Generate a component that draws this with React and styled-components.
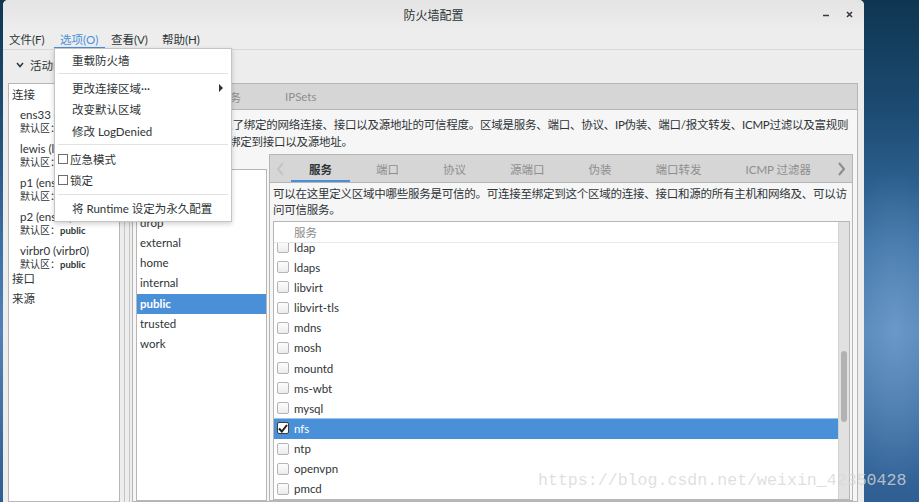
import React from 'react'
import styled, { createGlobalStyle } from 'styled-components'

const GlobalStyle = createGlobalStyle`
  html, body { margin: 0; padding: 0; }
  body {
    font-family: Lato, "Noto Sans CJK SC", sans-serif;
    font-size: 11.5px;
    color: #2e3436;
    overflow: hidden;
  }
`

const Desktop = styled.div`
  position: relative;
  width: 919px;
  height: 502px;
  overflow: hidden;
  display: flex;
  background:
    radial-gradient(ellipse 60px 160px at 895px 330px, rgba(140,180,220,0.45), transparent),
    linear-gradient(180deg, #0f3651 0%, #1c4b72 22%, #3a6fa3 48%, #4f82b6 66%, #2e5e92 100%);
`

const Window = styled.div`
  position: relative;
  margin-left: 3px;
  width: 861px;
  height: 502px;
  display: flex;
  flex-direction: column;
  background: #ededed;
  border-radius: 5px 5px 0 0;
`

const TitleBar = styled.div`
  height: 28px;
  display: grid;
  grid-template-columns: 1fr auto 1fr;
  align-items: center;
  background: linear-gradient(#e4e4e4, #ececec);
  border-radius: 5px 5px 0 0;
`

const Title = styled.div`
  font-size: 12px;
  color: #2e3436;
`

const Controls = styled.div`
  justify-self: end;
  display: flex;
  align-items: center;
  gap: 17px;
  padding-right: 11px;
`

const MenuBar = styled.div`
  height: 21px;
  display: flex;
  align-items: stretch;
  border-bottom: 1px solid #d9d9d9;
`

const MenuTitle = styled.div`
  width: 51px;
  box-sizing: border-box;
  display: flex;
  align-items: center;
  padding-left: 6px;
  white-space: nowrap;
  color: ${p => (p.$active ? '#4a90d9' : '#2e3436')};
  box-shadow: ${p => (p.$active ? 'inset 0 -2px #4a90d9' : 'none')};
`

const Toolbar = styled.div`
  height: 33px;
  display: flex;
  align-items: center;
  padding: 0 0 3px 13px;
  box-sizing: border-box;
  gap: 6px;
`

const Expander = styled.div`
  display: flex;
  align-items: center;
  gap: 6px;
`

const Combo = styled.div`
  margin-left: 40px;
  height: 25px;
  width: 92px;
  border: 1px solid #b9b9b9;
  border-radius: 4px;
  background: linear-gradient(#f6f6f6, #e8e8e8);
  display: flex;
  align-items: center;
  padding-left: 8px;
  box-sizing: border-box;
`

const Main = styled.div`
  flex: 1;
  display: flex;
  padding: 0 6px 0 5px;
  min-height: 0;
`

const LeftPanel = styled.div`
  width: 112px;
  box-sizing: border-box;
  background: #fff;
  border: 1px solid #b6b6b6;
  padding: 1px 0 0 3px;
`

const SectionLabel = styled.div`
  height: 19px;
  line-height: 19px;
  margin-top: ${p => p.$mt || 0}px;
`

const Conn = styled.div`
  padding-left: 8px;
  margin-top: ${p => (p.$first ? 4 : 0)}px;
  margin-bottom: 7px;
`

const ConnName = styled.div`
  height: 13px;
  line-height: 13px;
  white-space: nowrap;
`

const ConnZone = styled.div`
  height: 13px;
  line-height: 13px;
  margin-top: 1px;
  font-size: 10px;
  white-space: nowrap;
  span { font-weight: bold; font-size: 9.5px; }
`

const Paned = styled.div`
  width: 11px;
  display: flex;
  justify-content: center;
  padding-left: 1px;
`

const Grip = styled.div`
  width: 4px;
  border-left: 1px solid #c6c6c6;
  border-right: 1px solid #c6c6c6;
`

const Notebook = styled.div`
  flex: 1;
  min-width: 0;
  display: flex;
  flex-direction: column;
  border: 1px solid #b6b6b6;
  background: #f6f6f6;
`

const TabBar = styled.div`
  height: ${p => p.$h}px;
  flex-shrink: 0;
  display: flex;
  align-items: stretch;
  background: #d6d6d6;
  border-bottom: 1px solid #b6b6b6;
`

const TabStrip = styled.div`
  flex: 1;
  min-width: 0;
  display: flex;
  gap: 8px;
  overflow: hidden;
`

const Tab = styled.div`
  display: flex;
  align-items: center;
  padding: 0 18px;
  white-space: nowrap;
  color: ${p => (p.$active ? '#2e3436' : '#8e8e8e')};
  font-weight: ${p => (p.$active ? 'bold' : 'normal')};
  box-shadow: ${p => (p.$active ? 'inset 0 -2px #4a90d9' : 'none')};
`

const Arrow = styled.div`
  width: 21px;
  flex-shrink: 0;
  display: flex;
  align-items: center;
  justify-content: center;
`

const Body = styled.div`
  flex: 1;
  min-height: 0;
  display: flex;
  flex-direction: column;
  padding: ${p => p.$pad};
`

const Desc = styled.div`
  line-height: ${p => p.$lh}px;
  padding-left: ${p => p.$indent || 0}px;
  letter-spacing: -0.25px;
  white-space: nowrap;
  overflow: hidden;
`

const ZoneRow = styled.div`
  flex: 1;
  min-height: 0;
  display: flex;
  gap: 2px;
  margin-top: 4px;
`

const ZoneList = styled.div`
  width: 131px;
  box-sizing: border-box;
  margin-top: 15px;
  background: #fff;
  border: 1px solid #b6b6b6;
  padding-top: 3px;
`

const ZoneItem = styled.div`
  height: 20.1px;
  line-height: 20px;
  padding-left: 3px;
  background: ${p => (p.$selected ? '#4a90d9' : 'transparent')};
  color: ${p => (p.$selected ? '#fff' : '#2e3436')};
  font-weight: ${p => (p.$selected ? 'bold' : 'normal')};
`

const ListBox = styled.div`
  flex: 1;
  min-height: 0;
  margin-top: 3px;
  display: flex;
  background: #fff;
  border: 1px solid #b6b6b6;
`

const ListMain = styled.div`
  flex: 1;
  display: flex;
  flex-direction: column;
  min-width: 0;
`

const ListHeader = styled.div`
  height: 20px;
  flex-shrink: 0;
  line-height: 20px;
  padding-left: 20px;
  color: #8a8a8a;
  border-bottom: 1px solid #e8e8e8;
  font-family: "Noto Sans CJK SC", serif;
`

const Rows = styled.div`
  flex: 1;
  overflow: hidden;
`

const Row = styled.div`
  height: 20.17px;
  display: flex;
  align-items: center;
  gap: 5px;
  padding-left: 3px;
  margin-top: ${p => (p.$first ? '-6px' : '0')};
  background: ${p => (p.$selected ? '#4a90d9' : 'transparent')};
  box-shadow: ${p => (p.$selected ? 'inset 0 1px #9cc3ea' : 'none')};
  color: ${p => (p.$selected ? '#fff' : '#2e3436')};
`

const Check = styled.div`
  width: 12px;
  height: 12px;
  box-sizing: border-box;
  border-radius: 2px;
  border: 1px solid ${p => (p.$checked ? '#3b3b3b' : '#b4b4b4')};
  background: ${p => (p.$checked ? '#fff' : 'linear-gradient(#fdfdfd, #ececec)')};
  display: flex;
  align-items: center;
  justify-content: center;
`

const Scrollbar = styled.div`
  width: 10px;
  background: #e1e1e1;
  border-left: 1px solid #d2d2d2;
  padding-top: 129px;
  display: flex;
  justify-content: center;
`

const Thumb = styled.div`
  width: 6px;
  height: 71px;
  border-radius: 3px;
  background: #b2b2b2;
`

const Menu = styled.div`
  position: absolute;
  left: 51px;
  top: 48px;
  width: 178px;
  box-sizing: border-box;
  background: #fff;
  border: 1px solid #c4c4c4;
  box-shadow: 0 2px 5px rgba(0, 0, 0, 0.18);
  padding: 0 0 2px;
`

const MenuItem = styled.div`
  height: 21.3px;
  display: flex;
  align-items: center;
  padding-left: ${p => (p.$check ? '3px' : '17px')};
  padding-right: 8px;
  white-space: nowrap;
`

const MenuSep = styled.div`
  height: 1px;
  margin: 3px 3px;
  background: #e2e2e2;
`

const MenuBox = styled.div`
  width: 10px;
  height: 10px;
  box-sizing: border-box;
  border: 1px solid #6e6e6e;
  margin-right: 2px;
`

const SubArrow = styled.div`
  margin-left: auto;
  width: 0;
  height: 0;
  border-top: 4px solid transparent;
  border-bottom: 4px solid transparent;
  border-left: 4px solid #2e3436;
`

const Watermark = styled.div`
  position: absolute;
  left: 538px;
  top: 471px;
  font-family: "Liberation Mono", monospace;
  font-size: 16.6px;
  color: rgba(215, 215, 215, 0.8);
  white-space: nowrap;
  pointer-events: none;
`

const connections = [
  { name: 'ens33 (ens33)', zone: 'public' },
  { name: 'lewis (lewis)', zone: 'public' },
  { name: 'p1 (ens37)', zone: 'public' },
  { name: 'p2 (ens38)', zone: 'public' },
  { name: 'virbr0 (virbr0)', zone: 'public' },
]

const zones = ['block', 'dmz', 'drop', 'external', 'home', 'internal', 'public', 'trusted', 'work']

const services = ['ldap', 'ldaps', 'libvirt', 'libvirt-tls', 'mdns', 'mosh', 'mountd', 'ms-wbt', 'mysql', 'nfs', 'ntp', 'openvpn', 'pmcd', 'pop3']

const innerTabs = ['服务', '端口', '协议', '源端口', '伪装', '端口转发', 'ICMP 过滤器']

const Chevron = ({ dir, color }) => (
  <svg width="9" height="14" viewBox="0 0 9 14">
    <polyline
      points={dir === 'left' ? '7,1 2,7 7,13' : '2,1 7,7 2,13'}
      fill="none"
      stroke={color}
      strokeWidth="2"
    />
  </svg>
)

const App = () => {
  return (
    <Desktop>
      <GlobalStyle />
      <Window>
        <TitleBar>
          <div />
          <Title>防火墙配置</Title>
          <Controls>
            <svg width="6" height="6" viewBox="0 0 6 6">
              <line x1="0" y1="4.5" x2="6" y2="4.5" stroke="#3a3a3a" strokeWidth="1.5" />
            </svg>
            <svg width="7" height="7" viewBox="0 0 7 7">
              <path d="M1 1 L6 6 M6 1 L1 6" stroke="#3a3a3a" strokeWidth="1.6" />
            </svg>
          </Controls>
        </TitleBar>

        <MenuBar>
          <MenuTitle>文件(F)</MenuTitle>
          <MenuTitle $active>选项(O)</MenuTitle>
          <MenuTitle>查看(V)</MenuTitle>
          <MenuTitle>帮助(H)</MenuTitle>
        </MenuBar>

        <Toolbar>
          <Expander>
            <svg width="8" height="6" viewBox="0 0 8 6">
              <polyline points="1,1 4,4.5 7,1" fill="none" stroke="#2e3436" strokeWidth="1.5" />
            </svg>
            活动的绑定
          </Expander>
          <Combo>运行时</Combo>
        </Toolbar>

        <Main>
          <LeftPanel>
            <SectionLabel>连接</SectionLabel>
            {connections.map((c, i) => (
              <Conn key={c.name} $first={i === 0}>
                <ConnName>{c.name}</ConnName>
                <ConnZone>
                  默认区：<span>{c.zone}</span>
                </ConnZone>
              </Conn>
            ))}
            <SectionLabel $mt={-9}>接口</SectionLabel>
            <SectionLabel $mt={1}>来源</SectionLabel>
          </LeftPanel>

          <Paned>
            <Grip />
          </Paned>

          <Notebook>
            <TabBar $h={25}>
              <TabStrip>
                <Tab $active>区域</Tab>
                <Tab>服务</Tab>
                <Tab>IPSets</Tab>
              </TabStrip>
            </TabBar>
            <Body $pad="6px 4px 0 3px">
              <Desc $lh={17} $indent={3}>
                FirewallD 区域定义了绑定的网络连接、接口以及源地址的可信程度。区域是服务、端口、协议、IP伪装、端口/报文转发、ICMP过滤以及富规则
                <br />
                的组合。区域可以绑定到接口以及源地址。
              </Desc>
              <ZoneRow>
                <ZoneList>
                  {zones.map(z => (
                    <ZoneItem key={z} $selected={z === 'public'}>
                      {z}
                    </ZoneItem>
                  ))}
                </ZoneList>

                <Notebook>
                  <TabBar $h={27}>
                    <Arrow>
                      <Chevron dir="left" color="#c4c4c4" />
                    </Arrow>
                    <TabStrip>
                      {innerTabs.map((t, i) => (
                        <Tab key={t} $active={i === 0}>
                          {t}
                        </Tab>
                      ))}
                    </TabStrip>
                    <Arrow>
                      <Chevron dir="right" color="#8a8a8a" />
                    </Arrow>
                  </TabBar>
                  <Body $pad="3px 2px 0 3px">
                    <Desc $lh={16}>
                      可以在这里定义区域中哪些服务是可信的。可连接至绑定到这个区域的连接、接口和源的所有主机和网络及、可以访
                      <br />
                      问可信服务。
                    </Desc>
                    <ListBox>
                      <ListMain>
                        <ListHeader>服务</ListHeader>
                        <Rows>
                          {services.map((s, i) => (
                            <Row key={s} $first={i === 0} $selected={s === 'nfs'}>
                              <Check $checked={s === 'nfs'}>
                                {s === 'nfs' && (
                                  <svg width="10" height="9" viewBox="0 0 10 9">
                                    <path d="M1 4.5 L3.8 7.5 L9 1" fill="none" stroke="#1e1e1e" strokeWidth="2" />
                                  </svg>
                                )}
                              </Check>
                              {s}
                            </Row>
                          ))}
                        </Rows>
                      </ListMain>
                      <Scrollbar>
                        <Thumb />
                      </Scrollbar>
                    </ListBox>
                  </Body>
                </Notebook>
              </ZoneRow>
            </Body>
          </Notebook>
        </Main>

        <Menu>
          <MenuItem>重载防火墙</MenuItem>
          <MenuSep />
          <MenuItem>
            更改连接区域···
            <SubArrow />
          </MenuItem>
          <MenuItem>改变默认区域</MenuItem>
          <MenuItem>修改 LogDenied</MenuItem>
          <MenuSep />
          <MenuItem $check>
            <MenuBox />
            应急模式
          </MenuItem>
          <MenuItem $check>
            <MenuBox />
            锁定
          </MenuItem>
          <MenuSep />
          <MenuItem>将 Runtime 设定为永久配置</MenuItem>
        </Menu>
      </Window>
      <Watermark>https://blog.csdn.net/weixin_42350428</Watermark>
    </Desktop>
  )
}

export default App
